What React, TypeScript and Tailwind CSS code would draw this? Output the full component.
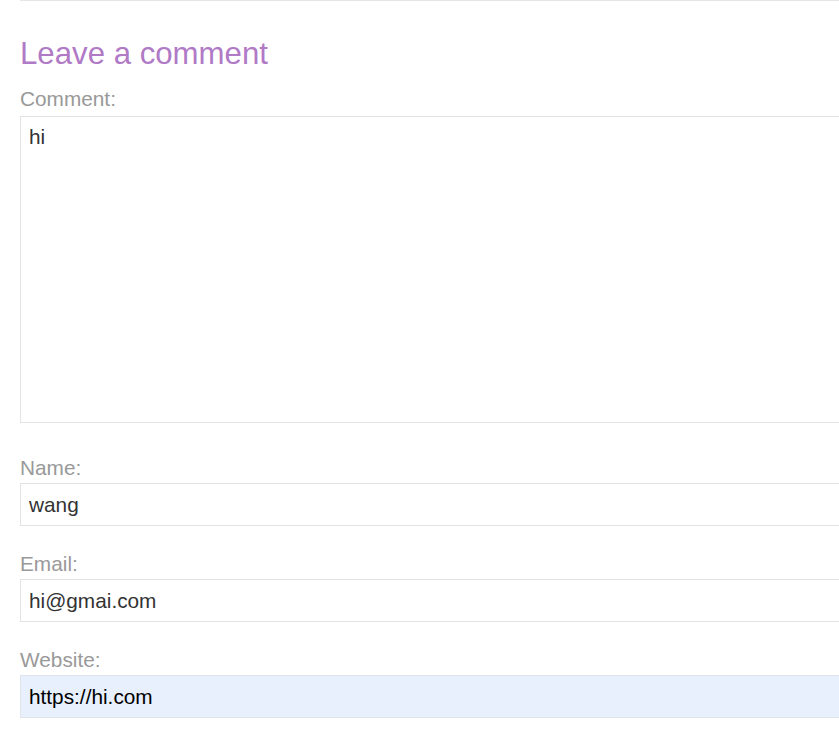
import React from 'react';

// Comment form: heading, textarea and three single-line fields.
// The fields run past the right edge of the window, as in the shot.

const FIELDS = [
  { label: 'Name:', value: 'wang', autofill: false },
  { label: 'Email:', value: 'hi@gmai.com', autofill: false },
  { label: 'Website:', value: 'https://hi.com', autofill: true },
];

export default function App() {
  return (
    <div className="h-[742px] w-full overflow-hidden bg-white pl-[20px] font-['Liberation_Sans',Arial,sans-serif]">
      <div className="w-[1000px] border-t border-[#e6e6e6]" />

      <h2 className="mt-[35px] text-[31.2px] leading-[36px] font-normal text-[#b07ac6]">Leave a comment</h2>

      <label className="mt-[13px] block text-[20.8px] leading-[28px] text-[#999999]">Comment:</label>
      <div className="mt-[3px] h-[307px] w-[1000px] border border-[#e3e3e3] px-[8px] pt-[8px] text-[20.8px] leading-[24px] text-[#333333]">
        hi
      </div>

      {FIELDS.map((f, i) => (
        <div key={f.label} className={i === 0 ? 'mt-[31px]' : 'mt-[24px]'}>
          <label className="block text-[20.8px] leading-[28px] text-[#999999]">{f.label}</label>
          <div
            className={
              f.autofill
                ? 'mt-[1px] flex h-[43px] w-[1000px] items-center border border-[#dfe3ea] bg-[#e8f0fe] px-[8px] text-[20.8px] text-black'
                : 'mt-[1px] flex h-[43px] w-[1000px] items-center border border-[#e3e3e3] bg-white px-[8px] text-[20.8px] text-[#333333]'
            }
          >
            {f.value}
          </div>
        </div>
      ))}
    </div>
  );
}
